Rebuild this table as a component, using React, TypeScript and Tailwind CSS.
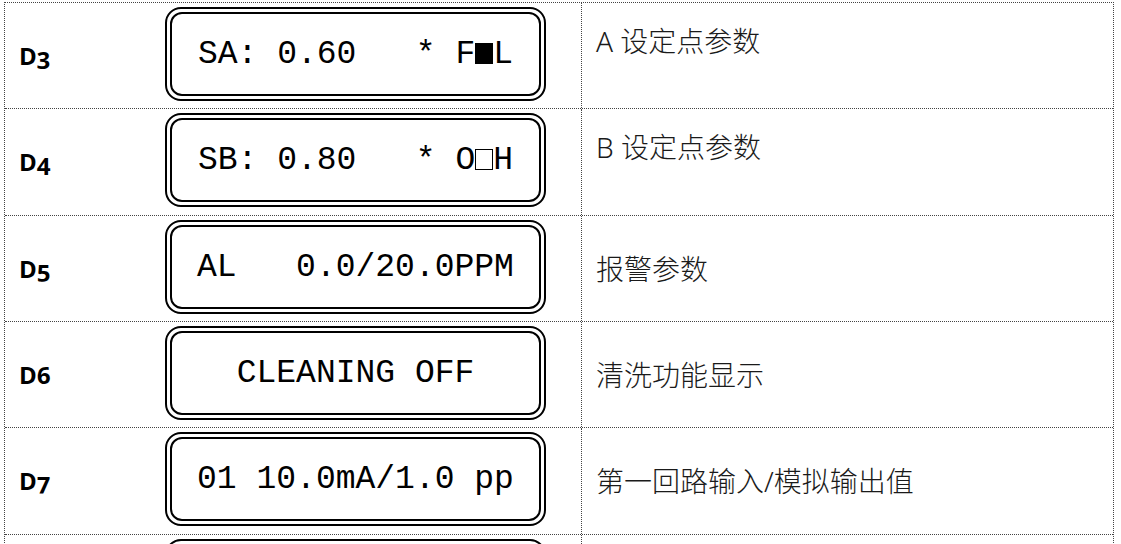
import React from 'react';

// one row of the display table: code, LCD panel text, description
type Row = {
  id: string;
  code: string;
  lcd: React.ReactNode;
  desc: string;
  top?: boolean;
  h: string;
};

const ROWS: Row[] = [
  { id: 'd3', code: 'D3', lcd: <>SA: 0.60&nbsp;&nbsp; * F<span className="inline-block w-[18px] h-[21px] bg-black align-[-1px]" />L</>, desc: 'A 设定点参数', top: true, h: 'h-[106px]' },
  { id: 'd4', code: 'D4', lcd: <>SB: 0.80&nbsp;&nbsp; * O<span className="inline-block w-[18px] h-[21px] border border-black align-[-1px]" />H</>, desc: 'B 设定点参数', top: true, h: 'h-[107px]' },
  { id: 'd5', code: 'D5', lcd: <>AL&nbsp;&nbsp; 0.0/20.0PPM</>, desc: '报警参数', h: 'h-[106px]' },
  { id: 'd6', code: 'D6', lcd: <>CLEANING OFF</>, desc: '清洗功能显示', h: 'h-[106px]' },
  { id: 'd7', code: 'D7', lcd: <>01 10.0mA/1.0 pp</>, desc: '第一回路输入/模拟输出值', h: 'h-[107px]' },
  { id: 'd8', code: '', lcd: <>&nbsp;</>, desc: '', h: 'h-[106px]' },
];

function LcdPanel({ children }: { children: React.ReactNode }) {
  return (
    <div className="w-[381px] h-[94px] border-2 border-black rounded-[16px] p-[3px]">
      <div className="h-full border-2 border-black rounded-[12px] flex items-center justify-center">
        <span className="font-['Liberation_Mono',monospace] text-[33px] leading-none text-black whitespace-pre">
          {children}
        </span>
      </div>
    </div>
  );
}

export default function App() {
  return (
    <div className="w-[1121px] h-[544px] overflow-hidden bg-white">
      <div className="ml-[4px] mt-[2px] w-[1110px] border-l border-r border-t border-dotted border-[#444]">
        {ROWS.map((row) => (
          <div key={row.id} className={`${row.h} flex border-b border-dotted border-[#444]`}>
            {/* code + panel */}
            <div className="w-[577px] shrink-0 border-r border-dotted border-[#444] flex">
              <div className="w-[160px] pl-[14px] flex items-center">
                <span className="font-['Open_Sans',sans-serif] font-bold text-[24px] text-black oldstyle-nums">
                  {row.code}
                </span>
              </div>
              <div className="pt-[4px]">
                <LcdPanel>{row.lcd}</LcdPanel>
              </div>
            </div>

            {/* description */}
            <div className={`flex-1 pl-[14px] flex ${row.top ? 'items-start pt-[24px]' : 'items-center'}`}>
              <span className="font-['Noto_Sans','Noto_Sans_CJK_SC',sans-serif] font-light text-[28px] leading-none text-[#1a1a1a]">
                {row.desc}
              </span>
            </div>
          </div>
        ))}
      </div>
    </div>
  );
}
